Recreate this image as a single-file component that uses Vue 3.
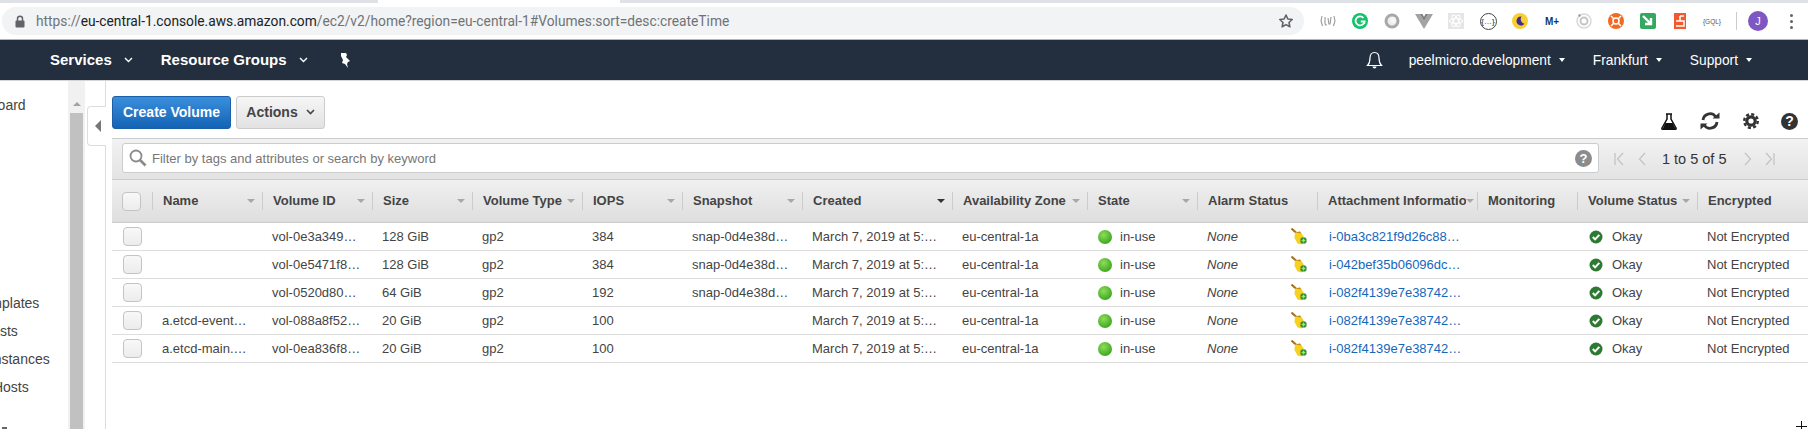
<template>
  <div class="page">
    <div class="tabs"><div class="tab-active"></div></div>

    <div class="browser-bar">
      <div class="omnibox">
        <svg class="lock" width="10" height="13" viewBox="0 0 10 13"><path d="M2.5 6V3.8a2.5 2.5 0 0 1 5 0V6" fill="none" stroke="#5f6368" stroke-width="1.5"/><rect x="0.5" y="5.5" width="9" height="7" rx="1" fill="#5f6368"/></svg>
        <span class="url"><span class="url-dim">https://</span>eu-central-1.console.aws.amazon.com<span class="url-dim">/ec2/v2/home?region=eu-central-1#Volumes:sort=desc:createTime</span></span>
        <svg class="star" width="16" height="16" viewBox="0 0 24 24"><path d="M12 3l2.8 6 6.5.8-4.8 4.4 1.3 6.5L12 17.4l-5.8 3.3 1.3-6.5-4.8-4.4 6.5-.8z" fill="none" stroke="#5f6368" stroke-width="2.4" stroke-linejoin="round"/></svg>
      </div>
      <div class="exts">
        <span class="ext"><svg width="16" height="12" viewBox="0 0 16 12"><path d="M2 1L1 6l1.500 5M14 1l1 5-1.500 5M5 2v7l1.500 1.500M8 3l1 6.500M11 2l-1 7.500" fill="none" stroke="#9a9a9a" stroke-width="1.100"/></svg></span>
        <span class="ext"><svg width="16" height="16" viewBox="0 0 16 16"><circle cx="8" cy="8" r="8" fill="#15c26b"/><path d="M11.500 5A4.500 4.500 0 1 0 12.500 8.500H8.800" fill="none" stroke="#fff" stroke-width="1.800"/><path d="M12.500 11V8" stroke="#fff" stroke-width="1.500"/></svg></span>
        <span class="ext"><svg width="16" height="16" viewBox="0 0 16 16"><circle cx="8" cy="8" r="6" fill="#eee" stroke="#a8a8a8" stroke-width="3"/><circle cx="9" cy="7" r="3" fill="#f6f6f6"/></svg></span>
        <span class="ext"><svg width="18" height="16" viewBox="0 0 18 16"><path d="M0 1h5l4 7 4-7h5L9 16z" fill="#a3a3a3"/><path d="M5 1h2.500L9 4l1.500-3H13L9 8z" fill="#7d7d7d"/></svg></span>
        <span class="ext"><svg width="16" height="16" viewBox="0 0 16 16"><rect width="16" height="16" fill="#e6e6e6"/><g fill="none" stroke="#fff" stroke-width="1"><ellipse cx="8" cy="8" rx="6.500" ry="2.500"/><ellipse cx="8" cy="8" rx="6.500" ry="2.500" transform="rotate(60 8 8)"/><ellipse cx="8" cy="8" rx="6.500" ry="2.500" transform="rotate(120 8 8)"/></g></svg></span>
        <span class="ext"><span class="ext-ring">{…}</span></span>
        <span class="ext"><svg width="16" height="16" viewBox="0 0 16 16"><circle cx="8" cy="8" r="8" fill="#f7cf33"/><path d="M9.500 3.500a4.500 4.500 0 1 0 3 7.300A4.800 4.800 0 0 1 9.500 3.500z" fill="#3f2d8f"/></svg></span>
        <span class="ext ext-text ext-m">M+</span>
        <span class="ext"><svg width="16" height="16" viewBox="0 0 16 16"><circle cx="8" cy="8" r="7" fill="none" stroke="#d8d8d8" stroke-width="1.500"/><circle cx="8" cy="8" r="3.500" fill="none" stroke="#c6c6c6" stroke-width="2"/><circle cx="3.500" cy="2.500" r="1.200" fill="#999"/></svg></span>
        <span class="ext"><svg width="16" height="16" viewBox="0 0 16 16"><circle cx="8" cy="8" r="8" fill="#f26a22"/><circle cx="8" cy="8" r="3" fill="none" stroke="#fff" stroke-width="1.500"/><path d="M3 3l2.500 2.500M13 3l-2.500 2.500M3 13l2.500-2.500M13 13l-2.500-2.500" stroke="#fff" stroke-width="1.500"/></svg></span>
        <span class="ext"><svg width="16" height="16" viewBox="0 0 16 16"><rect width="16" height="16" rx="2" fill="#35a860"/><path d="M3 3l8 8M11 5v6H5" fill="none" stroke="#fff" stroke-width="2.400"/></svg></span>
        <span class="ext"><svg width="12" height="16" viewBox="0 0 12 16"><rect width="12" height="16" fill="#f4582e"/><path d="M6 3h4M6 3v5H2M6 8h4v5H6M2 13h4" fill="none" stroke="#fff" stroke-width="1.500"/></svg></span>
        <span class="ext ext-text ext-gql">{GQL}</span>
        <span class="bar-divider"></span>
        <span class="avatar">J</span>
        <span class="kebab"><i></i><i></i><i></i></span>
      </div>
    </div>

    <nav class="top-nav">
      <span class="nav-main">Services</span>
      <svg class="chev" width="9" height="6" viewBox="0 0 9 6"><path d="M1 1l3.500 3.500L8 1" fill="none" stroke="#fff" stroke-width="1.400"/></svg>
      <span class="nav-main nav-groups">Resource Groups</span>
      <svg class="chev" width="9" height="6" viewBox="0 0 9 6"><path d="M1 1l3.500 3.500L8 1" fill="none" stroke="#fff" stroke-width="1.400"/></svg>
      <svg class="pin" width="13" height="15" viewBox="0 0 13 15"><path d="M2 0h5l1 2-1 2 4 4-2 1-1 2 1 4-3-4-3-1 1-3-2-4z" fill="#fff"/></svg>
      <svg class="bell" width="17" height="18" viewBox="0 0 17 18"><path d="M8.500 1.500c-3 0-4.500 2.500-4.500 5.500 0 4-1 6-2.500 7.500h14C14 13 13 11 13 7c0-3-1.500-5.500-4.500-5.500z" fill="none" stroke="#fff" stroke-width="1.200"/><path d="M6.500 15.500a2 2 0 0 0 4 0z" fill="#fff"/></svg>
      <span class="nav-item nav-account">peelmicro.development</span><i class="caret"></i>
      <span class="nav-item nav-region">Frankfurt</span><i class="caret"></i>
      <span class="nav-item nav-support">Support</span><i class="caret"></i>
    </nav>

    <div class="workspace">
      <aside class="sidebar">
        <div class="side-list">
          <div class="side-item">EC2 Dashboard</div>
          <div class="side-item side-gap">Launch Templates</div>
          <div class="side-item">Spot Requests</div>
          <div class="side-item">Reserved Instances</div>
          <div class="side-item">Dedicated Hosts</div>
          <div class="side-next"></div>
        </div>
      </aside>
      <div class="side-scroll"><i class="scroll-arrow"></i><div class="scroll-thumb"></div></div>
      <div class="collapse-col"><div class="collapse-tab"><i></i></div></div>

      <main class="content">
        <div class="actions-bar">
          <button class="btn btn-primary"><span>Create Volume</span></button>
          <button class="btn btn-plain"><span>Actions</span><svg width="9" height="6" viewBox="0 0 9 6"><path d="M1 1l3.500 3.500L8 1" fill="none" stroke="#444" stroke-width="1.600"/></svg></button>
          <div class="tools">
            <svg width="16" height="17" viewBox="0 0 16 17"><path d="M5 1h6M6 1v5L1 15a1 1 0 0 0 1 1.500h12a1 1 0 0 0 1-1.500L10 6V1" fill="none" stroke="#111" stroke-width="1.500"/><path d="M4.300 10h7.400l3 6H1.500z" fill="#111"/></svg>
            <svg width="22" height="18" viewBox="0 0 22 18"><path d="M4 8a7 7 0 0 1 12.500-3.500" fill="none" stroke="#333" stroke-width="2.800"/><path d="M13.500 6.500h7v-6z" fill="#333"/><path d="M18 10A7 7 0 0 1 5.500 13.500" fill="none" stroke="#333" stroke-width="2.800"/><path d="M8.500 11.500h-7v6z" fill="#333"/></svg>
            <svg width="16" height="16" viewBox="0 0 16 16"><circle cx="8" cy="8" r="4.200" fill="none" stroke="#333" stroke-width="3.200"/><circle cx="8" cy="8" r="6.800" fill="none" stroke="#333" stroke-width="2.400" stroke-dasharray="3.100 2.240"/></svg>
            <span class="help-dark">?</span>
          </div>
        </div>

        <div class="panel">
          <div class="filter-bar">
            <div class="filter-input">
              <svg width="18" height="18" viewBox="0 0 18 18"><circle cx="7" cy="7" r="5.500" fill="none" stroke="#8a8a8a" stroke-width="1.800"/><path d="M11 11l5.500 5.500" stroke="#8a8a8a" stroke-width="2.600"/></svg>
              <span class="placeholder">Filter by tags and attributes or search by keyword</span>
              <span class="help-grey">?</span>
            </div>
            <div class="pager">
              <svg width="10" height="14" viewBox="0 0 10 14"><path d="M1 1v12M9 1L3.500 7 9 13" fill="none" stroke="#c4c4c4" stroke-width="1.300"/></svg>
              <svg class="pg-prev" width="8" height="14" viewBox="0 0 8 14"><path d="M7 1L1.500 7 7 13" fill="none" stroke="#c4c4c4" stroke-width="1.300"/></svg>
              <span class="pg-text">1 to 5 of 5</span>
              <svg class="pg-next" width="8" height="14" viewBox="0 0 8 14"><path d="M1 1l5.500 6L1 13" fill="none" stroke="#c4c4c4" stroke-width="1.300"/></svg>
              <svg class="pg-last" width="10" height="14" viewBox="0 0 10 14"><path d="M1 1l5.500 6L1 13M9 1v12" fill="none" stroke="#c4c4c4" stroke-width="1.300"/></svg>
            </div>
          </div>

          <div class="grid-row grid-head">
            <div class="head-check"><span class="check"></span></div>
            <div v-for="col in columns" :key="col.label" class="head-cell" :class="{ 'head-tight': col.tight }">
              <span class="head-label">{{ col.label }}</span>
              <i v-if="col.sort" class="sort" :class="{ 'sort-active': col.active }"></i>
            </div>
          </div>

          <div v-for="row in rows" :key="row.id" class="grid-row body-row">
            <div class="cell-check"><span class="check"></span></div>
            <div class="cell cell-name">{{ row.name }}</div>
            <div class="cell">{{ row.id }}</div>
            <div class="cell">{{ row.size }}</div>
            <div class="cell">gp2</div>
            <div class="cell">{{ row.iops }}</div>
            <div class="cell">{{ row.snapshot }}</div>
            <div class="cell">March 7, 2019 at 5:…</div>
            <div class="cell">eu-central-1a</div>
            <div class="cell cell-state"><i class="dot"></i>in-use</div>
            <div class="cell cell-alarm">
              <em>None</em>
              <svg width="17" height="17" viewBox="0 0 17 17"><path d="M0.500 0.500l5 4.500" stroke="#a5701d" stroke-width="2"/><path d="M4 4.500L9 3.500l3.500 4.500 1 5-3 3.500-4-1L3.500 10z" fill="#f6d21e"/><path d="M4 4.500L9 3.500l1.500 2z" fill="#c08d1c"/><path d="M12.500 9.500v6M9.500 12.500h6" stroke="#1c7a2c" stroke-width="4"/><path d="M12.500 10.500v4M10.500 12.500h4" stroke="#9be86a" stroke-width="1.600"/></svg>
            </div>
            <div class="cell cell-link">{{ row.attachment }}</div>
            <div class="cell"></div>
            <div class="cell cell-status">
              <svg width="14" height="14" viewBox="0 0 14 14"><circle cx="7" cy="7" r="6.500" fill="#2d7a33"/><path d="M3.800 7l2.300 2.400 4.200-4.600" fill="none" stroke="#fff" stroke-width="2"/></svg>
              Okay
            </div>
            <div class="cell">Not Encrypted</div>
          </div>
        </div>
      </main>
    </div>
    <div class="cursor"></div>
  </div>
</template>

<script setup>
const columns = [
  { label: 'Name', sort: true },
  { label: 'Volume ID', sort: true },
  { label: 'Size', sort: true },
  { label: 'Volume Type', sort: true },
  { label: 'IOPS', sort: true },
  { label: 'Snapshot', sort: true },
  { label: 'Created', sort: true, active: true },
  { label: 'Availability Zone', sort: true },
  { label: 'State', sort: true },
  { label: 'Alarm Status' },
  { label: 'Attachment Information', sort: true, tight: true },
  { label: 'Monitoring' },
  { label: 'Volume Status', sort: true },
  { label: 'Encrypted' },
]

const rows = [
  { name: '', id: 'vol-0e3a349…', size: '128 GiB', iops: 384, snapshot: 'snap-0d4e38d…', attachment: 'i-0ba3c821f9d26c88…' },
  { name: '', id: 'vol-0e5471f8…', size: '128 GiB', iops: 384, snapshot: 'snap-0d4e38d…', attachment: 'i-042bef35b06096dc…' },
  { name: '', id: 'vol-0520d80…', size: '64 GiB', iops: 192, snapshot: 'snap-0d4e38d…', attachment: 'i-082f4139e7e38742…' },
  { name: 'a.etcd-event…', id: 'vol-088a8f52…', size: '20 GiB', iops: 100, snapshot: '', attachment: 'i-082f4139e7e38742…' },
  { name: 'a.etcd-main.…', id: 'vol-0ea836f8…', size: '20 GiB', iops: 100, snapshot: '', attachment: 'i-082f4139e7e38742…' },
]
</script>

<style>
html, body {
  margin: 0;
  background: #fff;
}
</style>

<style scoped>
.page {
  position: relative;
  width: 1808px;
  height: 429px;
  overflow: hidden;
  font-family: "Liberation Sans", Arial, sans-serif;
  font-size: 13px;
  color: #444;
}

.tabs {
  height: 3px;
  background: #dee1e6;
  padding-left: 378px;
}
.tab-active {
  width: 242px;
  height: 3px;
  background: #fff;
}

.browser-bar {
  display: flex;
  align-items: center;
  height: 36px;
  border-bottom: 1px solid #b5b5b5;
  background: #fff;
}
.omnibox {
  display: flex;
  align-items: center;
  width: 1302px;
  height: 28px;
  margin-left: 2px;
  border-radius: 14px;
  background: #f1f3f4;
}
.lock { margin-left: 13px; }
.url {
  margin-left: 11px;
  font-family: Roboto, sans-serif;
  font-size: 13.770px;
  color: #202124;
}
.url-dim { color: #6f7377; }
.star { margin-left: auto; margin-right: 10px; }

.exts {
  display: flex;
  align-items: center;
  margin-left: 8px;
}
.ext {
  display: flex;
  align-items: center;
  justify-content: center;
  width: 32px;
  height: 20px;
}
.ext-ring {
  width: 15px;
  height: 15px;
  border: 1px solid #444;
  border-radius: 50%;
  color: #222;
  font-size: 8px;
  line-height: 15px;
  text-align: center;
}
.ext-m { font-size: 10px; font-weight: 700; color: #0b3a70; }
.ext-gql { font-size: 6.500px; color: #555; }
.bar-divider {
  width: 1px;
  height: 18px;
  margin: 0 11px 0 8px;
  background: #ccc;
}
.avatar {
  width: 20px;
  height: 20px;
  border-radius: 50%;
  background: #7e57c2;
  color: #fff;
  font-size: 11px;
  line-height: 20px;
  text-align: center;
}
.kebab {
  display: flex;
  flex-direction: column;
  gap: 3px;
  margin-left: 22px;
}
.kebab i {
  width: 3px;
  height: 3px;
  border-radius: 50%;
  background: #5f6368;
}

.top-nav {
  display: flex;
  align-items: center;
  height: 40px;
  padding-left: 50px;
  background: #232f3e;
  border-bottom: 1px solid #d5d5d5;
  color: #fff;
}
.nav-main { padding-bottom: 2px; font-size: 15px; font-weight: 700; }
.chev { margin-left: 12px; }
.nav-groups { margin-left: 28px; }
.pin { margin-left: 31px; }
.bell { margin-left: auto; }
.nav-item { font-size: 13.750px; }
.nav-account { margin-left: 26px; }
.nav-region { margin-left: 28px; }
.nav-support { margin-left: 28px; }
.caret {
  width: 0;
  height: 0;
  margin-left: 8px;
  border-left: 3.500px solid transparent;
  border-right: 3.500px solid transparent;
  border-top: 4px solid #fff;
}
.caret:last-child { margin-right: 56px; }

.workspace {
  display: flex;
  height: 348px;
}
.sidebar {
  flex: 0 0 68px;
  overflow: hidden;
  font-size: 14px;
  color: #444;
}
.side-list {
  margin-left: -74px;
  padding-top: 10px;
  white-space: nowrap;
}
.side-item { line-height: 28px; }
.side-gap { margin-top: 170px; }
.side-next {
  width: 5px;
  height: 2px;
  margin: 26px 0 0 76px;
  background: #666;
}

.side-scroll {
  flex: 0 0 17px;
  padding: 0 2px;
  box-sizing: border-box;
  background: #f1f1f1;
}
.scroll-arrow {
  display: block;
  width: 0;
  height: 0;
  margin: 21px auto 0;
  border-left: 4px solid transparent;
  border-right: 4px solid transparent;
  border-bottom: 4px solid #a3a3a3;
}
.scroll-thumb {
  height: 330px;
  margin-top: 7px;
  background: #c1c1c1;
}

.collapse-col {
  flex: 0 0 21px;
  box-sizing: border-box;
  padding: 25px 0 0 2px;
  border-right: 1px solid #ddd;
}
.collapse-tab {
  display: flex;
  align-items: center;
  box-sizing: border-box;
  height: 40px;
  margin-right: -1px;
  padding-left: 7px;
  border: 1px solid #ddd;
  border-right: none;
  border-radius: 4px 0 0 4px;
  background: #fff;
}
.collapse-tab i {
  width: 0;
  height: 0;
  border-top: 6px solid transparent;
  border-bottom: 6px solid transparent;
  border-right: 6px solid #777;
}

.content {
  flex: 1;
  min-width: 0;
  padding-left: 6px;
}
.actions-bar {
  display: flex;
  align-items: flex-start;
  height: 57px;
  padding-top: 15px;
  box-sizing: border-box;
}
.btn {
  height: 33px;
  box-sizing: border-box;
  border-radius: 3px;
  font-family: inherit;
  font-size: 14px;
  font-weight: 700;
  padding: 0 0 2px;
}
.btn-primary {
  width: 119px;
  border: 1px solid #1a5fa8;
  background: linear-gradient(#3a8fdc, #1463b5);
  color: #fff;
}
.btn-plain {
  display: flex;
  align-items: center;
  justify-content: center;
  gap: 8px;
  width: 89px;
  margin-left: 5px;
  border: 1px solid #ccc;
  background: linear-gradient(#f6f6f6, #e2e2e2);
  color: #444;
}
.tools {
  display: flex;
  align-items: center;
  height: 18px;
  margin: 16px 10px 0 auto;
  gap: 22px;
}
.help-dark {
  width: 17px;
  height: 17px;
  border-radius: 50%;
  background: #333;
  color: #fff;
  font-size: 14px;
  font-weight: 700;
  line-height: 17px;
  text-align: center;
}

.filter-bar {
  display: flex;
  align-items: center;
  box-sizing: border-box;
  height: 42px;
  padding: 0 0 2px 10px;
  border-top: 1px solid #ccc;
  border-bottom: 1px solid #ccc;
  background: linear-gradient(#f2f2f2, #e3e3e3);
}
.filter-input {
  display: flex;
  align-items: center;
  box-sizing: border-box;
  width: 1477px;
  height: 30px;
  padding: 0 6px 0 6px;
  border: 1px solid #ccc;
  border-radius: 3px;
  background: #fff;
}
.placeholder {
  margin-left: 5px;
  color: #777;
}
.help-grey {
  width: 17px;
  height: 17px;
  margin-left: auto;
  border-radius: 50%;
  background: #8c8c8c;
  color: #fff;
  font-size: 13px;
  font-weight: 700;
  line-height: 17px;
  text-align: center;
}
.pager {
  display: flex;
  align-items: center;
  margin: 2px 0 0 15px;
}
.pg-prev { margin-left: 14px; }
.pg-text { margin-left: 16px; font-size: 14.500px; color: #333; }
.pg-next { margin-left: 17px; }
.pg-last { margin-left: 13px; }

.grid-row {
  display: grid;
  grid-template-columns: 40px 110px 110px 100px 110px 100px 120px 150px 135px 110px 120px 160px 100px 120px 111px;
  align-items: center;
}
.grid-head {
  height: 43px;
  border-bottom: 1px solid #ccc;
  box-sizing: border-box;
  background: linear-gradient(#f0f0f0, #dedede);
}
.head-check { padding-left: 10px; display: flex; }
.head-cell {
  display: flex;
  align-items: center;
  box-sizing: border-box;
  height: 18px;
  padding: 0 7px 0 10px;
  border-left: 1px solid #ccc;
  min-width: 0;
}
.head-tight { padding-right: 3px; }
.head-tight .sort { margin-left: 0; }
.head-label {
  flex: 1;
  overflow: hidden;
  padding-bottom: 2px;
  font-weight: 700;
  color: #444;
  white-space: nowrap;
}
.sort {
  flex: none;
  width: 0;
  height: 0;
  margin-left: 2px;
  border-left: 4px solid transparent;
  border-right: 4px solid transparent;
  border-top: 4px solid #a8a8a8;
}
.sort-active { border-top-color: #333; }
.check {
  display: block;
  box-sizing: border-box;
  width: 19px;
  height: 19px;
  border: 1px solid #c4c4c4;
  border-radius: 4px;
  background: linear-gradient(#f8f8f8, #ececec);
}
.body-row {
  box-sizing: border-box;
  height: 28px;
  border-bottom: 1px solid #ddd;
}
.cell-check { padding-left: 11px; }
.cell {
  padding-left: 10px;
  white-space: nowrap;
  color: #444;
}
.cell-state,
.cell-status,
.cell-alarm {
  display: flex;
  align-items: center;
}
.dot {
  width: 14px;
  height: 14px;
  margin: 0 8px 0 1px;
  border-radius: 50%;
  background: radial-gradient(circle at 40% 35%, #8fdc5a, #3ca81f 75%);
}
.cell-alarm em { width: 84px; }
.cell-link { padding-left: 12px; color: #1666bb; }
.cell-status svg { margin: 0 9px 0 2px; }
.cursor {
  position: absolute;
  left: 1796px;
  top: 426px;
  width: 11px;
  height: 1px;
  background: #111;
}
.cursor::after {
  content: "";
  position: absolute;
  left: 5px;
  top: -5px;
  width: 1px;
  height: 11px;
  background: #111;
}
</style>
